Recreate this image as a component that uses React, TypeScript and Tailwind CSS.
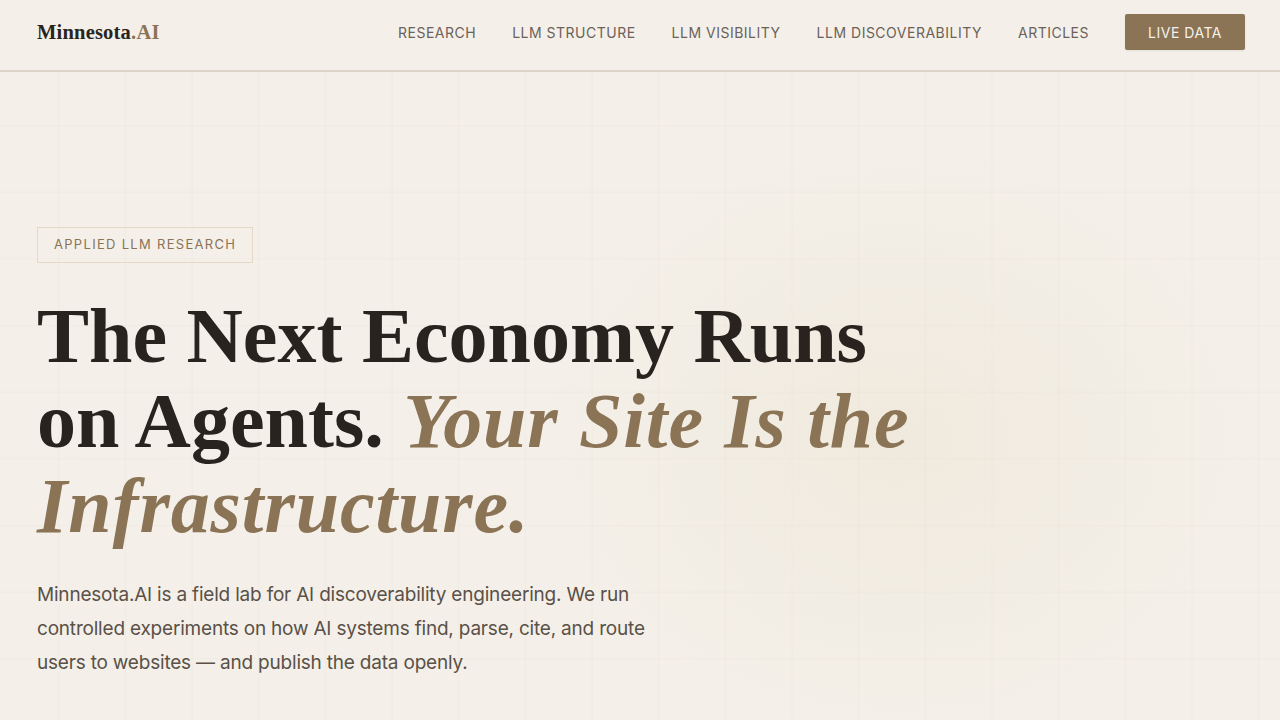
import React from "react";

const navItems = ["RESEARCH", "LLM STRUCTURE", "LLM VISIBILITY", "LLM DISCOVERABILITY", "ARTICLES"];

export default function App() {
  return (
    <div className="relative min-h-[720px] w-full overflow-hidden bg-[#f4f0e9] bg-[linear-gradient(to_right,rgba(139,115,85,0.045)_1px,transparent_1px),linear-gradient(to_bottom,rgba(139,115,85,0.045)_1px,transparent_1px)] bg-[size:66.67px_66.67px] bg-[position:58.33px_58.33px]">
      <div className="pointer-events-none absolute left-[540px] top-[140px] h-[600px] w-[720px] rounded-full bg-[radial-gradient(closest-side,rgba(232,222,200,0.35),rgba(232,222,200,0))]" />
      <header className="relative z-10 flex h-[72px] items-center justify-between border-b-2 border-[#dcd4c8] bg-[#f4f0e9] pb-[6px] pl-[37px] pr-[35px]">
        <div className="font-['Liberation_Serif',serif] text-[20.5px] font-bold tracking-[0.2px] text-[#2a2420]">
          Minnesota<span className="text-[#8b7355]">.AI</span>
        </div>
        <nav className="flex items-center">
          <div className="flex items-center gap-[36px] font-['Inter',sans-serif] text-[14px] tracking-[0.5px] text-[#6b6259]">
            {navItems.map((n) => (
              <span key={n}>{n}</span>
            ))}
          </div>
          <div className="ml-[36px] flex h-[36px] w-[120px] items-center justify-center rounded-[2px] bg-[#8b7355] font-['Inter',sans-serif] text-[14px] tracking-[0.5px] text-[#f6f1ea] shadow-[0_1px_2px_rgba(0,0,0,0.08)]">
            LIVE DATA
          </div>
        </nav>
      </header>
      <main className="relative z-10 px-[37px] pt-[155px]">
        <div className="inline-flex h-[36px] items-center border border-[#e3d9c6] px-[16px] font-['Inter',sans-serif] text-[13px] tracking-[1.3px] text-[#8b7355]">
          APPLIED LLM RESEARCH
        </div>
        <h1 className="mt-[30px] font-['Liberation_Serif',serif] text-[78px] font-bold leading-[85px] tracking-[0px] text-[#29231f]">
          The Next Economy Runs
          <br />
          on Agents. <em className="italic tracking-[0.9px] text-[#8b7355]">Your Site Is the</em>
          <br />
          <em className="italic tracking-[0.9px] text-[#8b7355]">Infrastructure.</em>
        </h1>
        <p className="mt-[30px] w-[640px] font-['Inter',sans-serif] text-[19px] leading-[34px] tracking-[-0.2px] text-[#5a5148]">
          Minnesota.AI is a field lab for AI discoverability engineering. We run controlled experiments on how AI systems find, parse, cite, and route users to websites — and publish the data openly.
        </p>
      </main>
    </div>
  );
}
